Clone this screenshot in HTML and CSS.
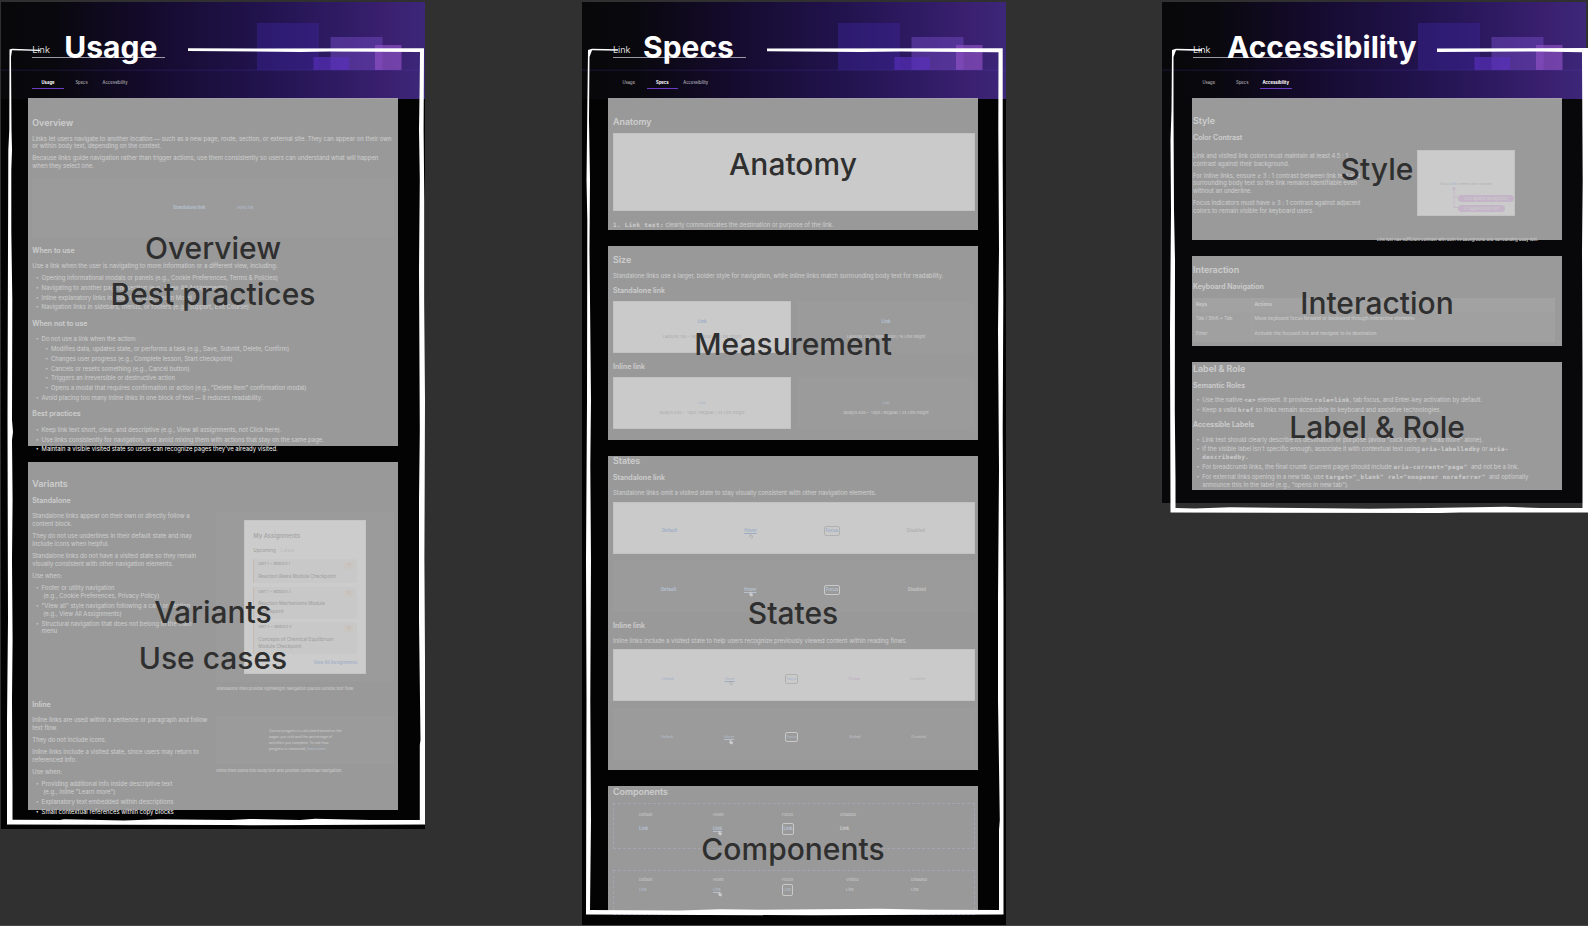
FILE: index.html
```html
<!DOCTYPE html>
<html lang="en">
<head>
  <meta charset="UTF-8" />
  <meta name="viewport" content="width=device-width, initial-scale=1.0"/>
  <title>Link documentation</title>
  <link rel="stylesheet" href="styles.css">
</head>
<body>
  <!-- Shared header artwork -->
  <svg class="defs" width="0" height="0">
    <symbol id="art" viewBox="0 0 424 97">
      <rect x="256" y="21" width="62" height="47" fill="#3f26a0" opacity=".42"/>
      <rect x="329.500" y="35" width="52" height="33" fill="#6b45b8" opacity=".55"/>
      <rect x="312.500" y="55" width="35.500" height="13" fill="#5930bd" opacity=".65"/>
      <rect x="374" y="43" width="26.500" height="25" fill="#8a50c0" opacity=".7"/>
      <rect x="0" y="67.500" width="424" height="1.500" fill="#5a3cc0" opacity=".16"/>
    </symbol>
    <symbol id="hand" viewBox="0 0 6 6">
      <path d="M2 3.500V1.300h.9v1.200l1.700.4-.3 2H2.600L1.300 3.500z" fill="none" stroke="currentColor" stroke-width=".6"/>
    </symbol>
    <symbol id="hand-solid" viewBox="0 0 6 6">
      <path d="M2 3V1.300h.9v1.200l1.700.4-.3 2H2.600L1.300 3.500z" fill="currentColor" stroke="currentColor" stroke-width=".6"/>
    </symbol>
  </svg>

  <main class="canvas">

    <!-- Usage -->
    <article class="board board-usage">
      <header class="hero">
        <svg class="hero-art"><use href="#art"/></svg>
        <div class="hero-title">Link</div>
        <nav class="tabs"><span class="active">Usage</span><span>Specs</span><span>Accessibility</span></nav>
      </header>
      <div class="content">
        <section class="overview">
          <h2>Overview</h2>
          <p>Links let users navigate to another location — such as a new page, route, section, or external site. They can appear on their own<br>or within body text, depending on the context.</p>
          <p>Because links guide navigation rather than trigger actions, use them consistently so users can understand what will happen<br>when they select one.</p>
          <div class="preview dark overview-preview"><b>Standalone link</b><span>Inline link</span></div>
          <h3>When to use</h3>
          <p>Use a link when the user is navigating to more information or a different view, including:</p>
          <ul>
            <li>Opening informational modals or panels (e.g., Cookie Preferences, Terms &amp; Policies)</li>
            <li>Navigating to another page or section (e.g., View All Assignments)</li>
            <li>Inline explanatory links in body text (e.g., Learn More)</li>
            <li>Navigation links in sidebars, menus, or footers (e.g., Support, Exit Course)</li>
          </ul>
          <h3>When not to use</h3>
          <ul>
            <li>Do not use a link when the action:</li>
            <li class="sub">Modifies data, updates state, or performs a task (e.g., Save, Submit, Delete, Confirm)</li>
            <li class="sub">Changes user progress (e.g., Complete lesson, Start checkpoint)</li>
            <li class="sub">Cancels or resets something (e.g., Cancel button)</li>
            <li class="sub">Triggers an irreversible or destructive action</li>
            <li class="sub">Opens a modal that requires confirmation or action (e.g., "Delete item" confirmation modal)</li>
            <li>Avoid placing too many inline links in one block of text — it reduces readability.</li>
          </ul>
          <h3>Best practices</h3>
          <ul>
            <li>Keep link text short, clear, and descriptive (e.g., View all assignments, not Click here).</li>
            <li>Use links consistently for navigation, and avoid mixing them with actions that stay on the same page.</li>
            <li>Maintain a visible visited state so users can recognize pages they've already visited.</li>
          </ul>
        </section>

        <section class="variants">
          <h2>Variants</h2>
          <h3>Standalone</h3>
          <div class="variant-row first">
            <div>
              <p>Standalone links appear on their own or directly follow a<br>content block.</p>
              <p>They do not use underlines in their default state and may<br>include icons when helpful.</p>
              <p>Standalone links do not have a visited state so they remain<br>visually consistent with other navigation elements.</p>
              <p>Use when:</p>
              <ul>
                <li>Footer or utility navigation<br>&nbsp;(e.g., Cookie Preferences, Privacy Policy)</li>
                <li>"View all" style navigation following a card or section<br>&nbsp;(e.g., View All Assignments)</li>
                <li>Structural navigation that does not belong to the main<br>menu</li>
              </ul>
            </div>
            <figure>
              <div class="preview dark tall">
                <div class="assignments">
                  <h4>My Assignments</h4>
                  <div class="filter"><b>Upcoming</b><span>Latest</span></div>
                  <div class="task"><small>UNIT 1 &nbsp;•&nbsp; MODULE 1</small><i>01</i><b>Reaction Rates Module Checkpoint</b></div>
                  <div class="task two"><small>UNIT 1 &nbsp;•&nbsp; MODULE 3</small><i>01</i><b>Reaction Mechanisms Module<br>Checkpoint</b></div>
                  <div class="task two"><small>UNIT 3 &nbsp;•&nbsp; MODULE 4</small><i>01</i><b>Concepts of Chemical Equilibrium<br>Module Checkpoint</b></div>
                  <a>View All Assignments</a>
                </div>
              </div>
              <figcaption>Standalone links provide lightweight navigation placed outside text flow.</figcaption>
            </figure>
          </div>
          <h3>Inline</h3>
          <div class="variant-row">
            <div>
              <p>Inline links are used within a sentence or paragraph and follow<br>text flow.</p>
              <p>They do not include icons.</p>
              <p>Inline links include a visited state, since users may return to<br>referenced info.</p>
              <p>Use when:</p>
              <ul>
                <li>Providing additional info inside descriptive text<br>&nbsp;(e.g., inline "Learn more")</li>
                <li>Explanatory text embedded within descriptions</li>
                <li>Small contextual references within copy blocks</li>
              </ul>
            </div>
            <figure>
              <div class="preview dark short">
                <p class="progress">Course progress is calculated based on the<br>pages you visit and the percentage of<br>activities you complete. To see how<br>progress is measured, <a>learn more</a>.</p>
              </div>
              <figcaption>Inline links blend into body text and provide contextual navigation.</figcaption>
            </figure>
          </div>
        </section>
      </div>
      <div class="cover usage-1"><span>Overview</span><span>Best practices</span></div>
      <div class="cover usage-2"><span>Variants</span><span>Use cases</span></div>
      <div class="board-name">Usage</div>
    </article>

    <!-- Specs -->
    <article class="board board-specs">
      <header class="hero">
        <svg class="hero-art"><use href="#art"/></svg>
        <div class="hero-title">Link</div>
        <nav class="tabs"><span>Usage</span><span class="active">Specs</span><span>Accessibility</span></nav>
      </header>
      <div class="content">
        <section class="anatomy">
          <h2>Anatomy</h2>
          <div class="preview light"><b>Link</b></div>
          <p><code>1. Link text:</code> clearly communicates the destination or purpose of the link.</p>
        </section>

        <section class="size">
          <h2>Size</h2>
          <p>Standalone links use a larger, bolder style for navigation, while Inline links match surrounding body text for readability.</p>
          <h3>Standalone link</h3>
          <div class="pair">
            <div class="preview light"><b>Link</b><small>Label/M.700 – 16px / Bold / 16 Line height</small></div>
            <div class="preview dark"><b>Link</b><small>Label/M.700 – 16px / Bold / 16 Line height</small></div>
          </div>
          <h3>Inline link</h3>
          <div class="pair inline-pair">
            <div class="preview light"><span>Link</span><small>Body/S.400 – &nbsp;14px / Regular / 24 Line height</small></div>
            <div class="preview dark"><span>Link</span><small>Body/S.400 – &nbsp;14px / Regular / 24 Line height</small></div>
          </div>
        </section>

        <section class="states">
          <h2>States</h2>
          <h3>Standalone link</h3>
          <p>Standalone links omit a visited state to stay visually consistent with other navigation elements.</p>
          <div class="preview light state-row">
            <b>Default</b><b class="hover">Hover<svg><use href="#hand"/></svg></b><b class="focus">Focus</b><b class="disabled">Disabled</b>
          </div>
          <div class="preview dark state-row">
            <b>Default</b><b class="hover">Hover<svg><use href="#hand-solid"/></svg></b><b class="focus">Focus</b><b class="disabled">Disabled</b>
          </div>
          <h3>Inline link</h3>
          <p>Inline links include a visited state to help users recognize previously viewed content within reading flows.</p>
          <div class="preview light state-row inline">
            <span>Default</span><span class="hover">Hover<svg><use href="#hand"/></svg></span><span class="focus">Focus</span><span class="visited">Visited</span><span class="disabled">Disabled</span>
          </div>
          <div class="preview dark state-row inline">
            <span>Default</span><span class="hover">Hover<svg><use href="#hand-solid"/></svg></span><span class="focus">Focus</span><span class="visited">Visited</span><span class="disabled">Disabled</span>
          </div>
        </section>

        <section class="components">
          <h2>Components</h2>
          <div class="component-set">
            <span>Default</span><span>Hover</span><span>Focus</span><span>Disabled</span>
            <b class="blue">Link</b><b class="hover blue">Link<svg><use href="#hand-solid"/></svg></b><b class="focus blue">Link</b><b>Link</b>
          </div>
          <div class="component-set five">
            <span>Default</span><span>Hover</span><span>Focus</span><span>Visited</span><span>Disabled</span>
            <em class="blue">Link</em><em class="hover blue">Link<svg><use href="#hand-solid"/></svg></em><em class="focus blue">Link</em><em>Link</em><em>Link</em>
          </div>
        </section>
      </div>
      <div class="cover specs-1"><span>Anatomy</span></div>
      <div class="cover specs-2"><span>Measurement</span></div>
      <div class="cover specs-3"><span>States</span></div>
      <div class="cover specs-4"><span>Components</span></div>
      <div class="board-name">Specs</div>
    </article>

    <!-- Accessibility -->
    <article class="board board-access">
      <header class="hero">
        <svg class="hero-art"><use href="#art"/></svg>
        <div class="hero-title">Link</div>
        <nav class="tabs"><span>Usage</span><span>Specs</span><span class="active">Accessibility</span></nav>
      </header>
      <div class="content">
        <section class="style">
          <h2>Style</h2>
          <h3>Color Contrast</h3>
          <div class="style-row">
            <div>
              <p>Link and visited link colors must maintain at least 4.5 : 1<br>contrast against their background.</p>
              <p>For inline links, ensure ≥ 3 : 1 contrast between link text and<br>surrounding body text so the link remains identifiable even<br>without an underline.</p>
              <p>Focus indicators must have ≥ 3 : 1 contrast against adjacent<br>colors to remain visible for keyboard users.</p>
            </div>
            <figure>
              <div class="contrast">
                <p>Focus <a>links</a> meet color contrast</p>
                <svg class="connector" viewBox="0 0 8 22"><circle cx="2" cy="1.500" r="1.500" fill="#c98fe0"/><path d="M2 2V20.500H7M2 10H7" fill="none" stroke="#c98fe0" stroke-width=".8"/></svg>
                <span class="pill">4.5:1 against background</span>
                <span class="pill small">3:1 against body text</span>
              </div>
              <figcaption>Link text has sufficient contrast with both its background and surrounding body text.</figcaption>
            </figure>
          </div>
        </section>

        <section class="interaction">
          <h2>Interaction</h2>
          <h3>Keyboard Navigation</h3>
          <table>
            <tr><th>Keys</th><th>Actions</th></tr>
            <tr><td>Tab / Shift + Tab</td><td>Move keyboard focus forward or backward through interactive elements</td></tr>
            <tr><td>Enter</td><td>Activate the focused link and navigate to its destination</td></tr>
          </table>
        </section>

        <section class="roles">
          <h2>Label &amp; Role</h2>
          <h3>Semantic Roles</h3>
          <ul>
            <li>Use the native <code>&lt;a&gt;</code> element. It provides <code>role=link</code>, tab focus, and Enter-key activation by default.</li>
            <li>Keep a valid <code>href</code> so links remain accessible to keyboard and assistive technologies.</li>
          </ul>
          <h3>Accessible Labels</h3>
          <ul>
            <li>Link text should clearly describe its destination or purpose (avoid "click here" or "read more" alone).</li>
            <li>If the visible label isn't specific enough, associate it with contextual text using <code>aria-labelledby</code> or <code>aria-<br>describedby.</code></li>
            <li>For breadcrumb links, the final crumb (current page) should include <code>aria-current="page"</code> &nbsp;and not be a link.</li>
            <li>For external links opening in a new tab, use <code>target="_blank" rel="noopener noreferrer"</code> &nbsp;and optionally<br>announce this in the label (e.g., "opens in new tab").</li>
          </ul>
        </section>
      </div>
      <div class="cover access-1"><span>Style</span></div>
      <div class="cover access-2"><span>Interaction</span></div>
      <div class="cover access-3"><span>Label &amp; Role</span></div>
      <div class="board-name">Accessibility</div>
    </article>

    <!-- Hand drawn frames around the boards -->
    <svg class="frames" viewBox="0 0 1588 926" fill="#fff">
      <path d="M9.500 49.500L12 48.800L40 49.800V51L12 50.300L11 57L11.500 130L12 150L11.300 170V230L12.300 300L12 420L13 432L12 440L12.600 500L12 560L12.600 640L12 700L12.500 790V819.700L60 820L64 819.300L100 820L124 820.400L160 819.300L230 820L250 819L300 820L315 818.800L370 820H419.800V745L420.500 740L419 620V500L419.800 430L419 270L419.800 180L419 130L419.600 90L420 52L330 51.500L300 52L188 51V48.200L260 48.600L424 48.200L423.600 130L424.300 200V300L425 400L424.500 560L425 660V824.500L250 825.200L230 825L7 824.500V720L8 620L7.500 420L8 250L8.300 150L9.300 130Z"/>
      <path d="M588 50L592 48.800L618 49.300V50.700L592 50.200L589.500 57L589 120L590 180L589.500 250L591 400L590.300 465L591 560L590.300 700L591 820L590 910L680 910.500L720 909.200L760 909.800L880 908.800L930 909.800L999 910V830L999.800 820L998 700V600L999 470L998 330L999 250L998.300 130L998.500 52.300L900 51.500L860 52L767 51.300V48.500L1002.700 48.300V160L1003.300 300L1002.700 430L1003.500 600V914.500L813 915.300L586 914.500L586.500 700L586 560L587 400L587.300 220L586.500 180L587.300 110Z"/>
      <path d="M1172 50L1176 48.800L1202 49.300V51L1176 50.200L1173.500 57V110L1174 210L1175 260L1174.800 410L1175.500 480V508L1195 508.600L1230 507.200L1300 508L1370 508.700L1430 508L1505 506.800L1540 508H1582.500V375L1582 250L1582.700 180L1582 60V52.300L1540 51.500L1437 52V48.500L1588 48V512.500H1460L1440 513L1170.500 512.500L1170 330L1171 210L1170.500 140L1171.500 110Z"/>
    </svg>
  </main>
</body>
</html>
```

FILE: styles.css
```css
* {
  margin: 0;
  padding: 0;
  box-sizing: border-box;
}

body {
  font-family: Inter, "Liberation Sans", sans-serif;
  background-color: #303030;
  overflow: hidden;
}

.defs {
  position: absolute;
}

.canvas {
  position: relative;
  width: 1588px;
  height: 926px;
  overflow: hidden;
  border-bottom: 1px solid #4a4648;
}

/* Boards placed on the canvas */
.board {
  position: absolute;
  top: 2px;
  width: 424px;
  height: 924px;
  background: #030303;
  color: #fff;
  font-size: 5.95px;
  line-height: 7.9px;
  white-space: nowrap;
}

.board-usage {
  left: 1.3px;
  height: 827px;
}

.board-specs {
  left: 582px;
}

.board-access {
  left: 1162px;
  height: 501px;
  background: #08080a;
}

.hero {
  position: relative;
  height: 97px;
  padding: 42px 31px 0;
  background: linear-gradient(90deg, #08080a 0%, #09080d 12%, #150b2e 36%, #22134e 62%, #2f1b64 80%, #3b2070 91%, #3c2779 100%);
}

.hero-art {
  position: absolute;
  top: 0;
  left: 0;
  width: 424px;
  height: 97px;
}

.hero-title {
  width: 133px;
  height: 14px;
  font-size: 9px;
  line-height: 12px;
  color: #ddd;
  border-bottom: 1.500px solid #9c98a6;
}

.tabs {
  display: flex;
  gap: 2px;
  margin-top: 16px;
  font-size: 4.2px;
  color: #c4c2c9;
  text-align: center;
}

.tabs span {
  width: 31.5px;
  height: 15px;
  line-height: 18.5px;
}

.tabs .active {
  color: #fff;
  font-weight: 700;
  border-bottom: 1px solid #6a3cc4;
}

.content {
  padding: 0 31px;
}

h2 {
  font-size: 8.9px;
  line-height: 10px;
  font-weight: 600;
  margin-bottom: 7px;
}

h3 {
  font-size: 7px;
  line-height: 8px;
  font-weight: 600;
  margin-bottom: 7.2px;
}

h2 + h3 {
  margin-top: 8px;
}

p {
  margin-bottom: 4.1px;
}

ul {
  list-style: none;
}

li {
  position: relative;
  margin-bottom: 2px;
  padding-left: 9.3px;
}

li::before {
  content: "•";
  position: absolute;
  left: 3.8px;
  font-size: 4.5px;
}

li.sub {
  margin-left: 9.3px;
}

code {
  font-family: "DejaVu Sans Mono", "Liberation Mono", monospace;
  font-weight: 700;
  font-size: 5.8px;
  line-height: 0;
  letter-spacing: 0.42px;
}

.preview {
  display: flex;
  align-items: center;
  justify-content: center;
  color: #0f66dc;
  font-size: 4px;
}

.preview.light {
  background: #f6f6f6;
  border: 1px solid #ccc;
}

.preview.dark {
  background: #0a0a0b;
  color: #8cc0ff;
}

figcaption {
  font-size: 4.05px;
  line-height: 6px;
}

/* Usage */
.overview {
  padding-top: 18.5px;
}

.overview-preview {
  height: 58.5px;
  gap: 32px;
  margin: 8px 0 9.8px;
}

.overview-preview b {
  font-size: 4.3px;
}

.overview-preview span {
  font-size: 3.7px;
}

.overview ul + h3 {
  margin-top: 8.3px;
}

.variants {
  margin-top: 25.7px;
}

.variant-row {
  display: grid;
  grid-template-columns: 184px 178px;
}

.variant-row.first {
  height: 189px;
}

.preview.tall {
  height: 170px;
  align-items: flex-start;
  padding-top: 7.5px;
}

.preview.short {
  height: 47.500px;
}

.tall + figcaption {
  margin-top: 4px;
}

.short + figcaption {
  margin-top: 4px;
}

.assignments {
  width: 122px;
  height: 154.5px;
  padding: 11px 8px;
  background: #fff;
  border: 1px solid #ddd;
  color: #222;
  line-height: 7.3px;
}

.assignments h4 {
  font-size: 5.9px;
  font-weight: 500;
  margin-bottom: 7.5px;
}

.filter {
  display: flex;
  gap: 5px;
  font-size: 4.6px;
}

.filter b {
  font-weight: 500;
}

.filter span {
  color: #999;
}

.task {
  display: grid;
  grid-template-columns: 1fr 11px;
  height: 24px;
  margin-top: 5.500px;
  padding: 2px 3px 0 4px;
  border-left: 1px solid #dc9b60;
  border-radius: 2px;
  background: #ececec;
}

.task + .task {
  margin-top: 3.5px;
}

.task.two {
  height: 31.800px;
}

.task small {
  font-size: 3.3px;
  font-weight: 600;
}

.task i {
  height: 7px;
  margin-top: 1px;
  border-radius: 4px;
  background: #f1d9c5;
  color: #b86a2a;
  font-size: 3px;
  font-style: normal;
  text-align: center;
}

.task b {
  font-size: 4.65px;
  font-weight: 500;
}

.assignments a {
  display: block;
  margin-top: 5px;
  font-size: 4.2px;
  font-weight: 600;
  text-align: right;
  color: #2a6ae0;
}

.progress {
  font-size: 3.55px;
  line-height: 6.2px;
  color: #eee;
  margin: 0;
}

.progress a {
  color: #8cc0ff;
}

/* Specs */
.anatomy {
  padding-top: 17.7px;
}

.anatomy h2 {
  margin-bottom: 6.3px;
}

.anatomy .preview {
  width: 362px;
  height: 78.5px;
  margin-bottom: 9.3px;
  font-size: 3.5px;
}

.size {
  padding-top: 22.6px;
}

.size p {
  margin-bottom: 6.4px;
}

.size h3 {
  margin-bottom: 6.3px;
}

.pair {
  display: grid;
  grid-template-columns: 178px 178px;
  gap: 6px;
  margin-bottom: 9.5px;
}

.pair .preview {
  height: 52.3px;
  flex-direction: column;
  line-height: 5px;
  gap: 9.5px;
  padding-top: 4px;
}

.pair b {
  font-size: 4.5px;
}

.pair span {
  font-size: 3.6px;
}

.inline-pair .preview {
  padding-top: 9.500px;
  gap: 4px;
}

.pair small {
  font-size: 4px;
  color: #444;
}

.pair .dark small {
  color: #fff;
}

.states {
  padding-top: 17.5px;
}

.states h3 {
  margin-bottom: 6.6px;
}

.states p {
  margin-bottom: 4.8px;
}

.state-row {
  height: 52px;
  width: 362px;
  padding: 7px 49px 0 48px;
  justify-content: space-between;
  line-height: 6px;
  font-size: 4.3px;
}

.state-row.dark {
  margin: 6.500px 0 9.800px;
}

.state-row.inline {
  font-size: 3.6px;
}

.hover {
  position: relative;
  text-decoration: underline;
}

.hover svg {
  position: absolute;
  left: 4px;
  top: 4.5px;
  width: 6px;
  height: 6px;
  color: #555;
}

.dark .hover svg,
.component-set .hover svg {
  color: #fff;
}

.focus {
  border: 1px solid #777;
  border-radius: 2px;
  padding: 1px 0.5px;
}

.dark .focus,
.component-set .focus {
  border-color: #eee;
}

.visited {
  color: #a040b8;
}

.disabled {
  color: #777;
}

.dark .visited {
  color: #e0c8f0;
}

.dark .disabled {
  color: #ccc;
}

.components {
  padding-top: 17.5px;
}

.component-set {
  display: grid;
  grid-template-columns: 74px 69px 58px 1fr;
  grid-template-rows: 8px 9px;
  row-gap: 5.500px;
  align-items: center;
  justify-items: start;
  width: 362px;
  height: 45.500px;
  padding: 7px 0 0 25px;
  margin-bottom: 21px;
  border: 1px dashed #3f3878;
  color: #eee;
  font-size: 3.9px;
}

.components h2 {
  margin-bottom: 6px;
}

.component-set.five {
  grid-template-columns: 74px 69px 64px 65px 1fr;
  row-gap: 2px;
  padding-top: 5.300px;
  margin: 0;
}

.component-set b {
  font-size: 4.5px;
}

.component-set em {
  font-style: normal;
}

.component-set .blue {
  color: #8cc0ff;
}

/* Accessibility */
.style {
  padding-top: 17.2px;
}

.style-row {
  display: grid;
  grid-template-columns: 184px 178px;
  height: 89px;
}

.style-row > div {
  padding-top: 2.3px;
}

.contrast {
  position: relative;
  width: 98px;
  height: 65.5px;
  margin: 1px 0 0 40px;
  padding-top: 29.5px;
  background: #fafafa;
  border: 1px solid #ccc;
  font-size: 3.5px;
  color: #555;
  text-align: center;
}

.contrast p {
  margin-bottom: 6px;
}

.contrast a {
  color: #0f66dc;
}

.connector {
  position: absolute;
  left: 34px;
  top: 36px;
  width: 8px;
  height: 22px;
}

.pill {
  display: block;
  width: 55.500px;
  height: 7px;
  margin: 0 0 3.5px 40px;
  border-radius: 4px;
  background: #d08ae6;
  color: #fff;
  line-height: 7px;
  font-size: 3.7px;
}

.pill.small {
  width: 47px;
}

.style figcaption {
  margin-top: 21.5px;
}

.interaction {
  padding-top: 26.8px;
}

.interaction h3 {
  margin-bottom: 6.5px;
}

table {
  width: 362px;
  table-layout: fixed;
  border-collapse: collapse;
  font-size: 4.7px;
  background: #242424;
}

tr {
  height: 14.5px;
}

th,
td {
  text-align: left;
  padding-left: 3px;
  border-bottom: 1px solid #2c2c2c;
}

th {
  background: #2f2f2f;
  font-weight: 600;
}

th:first-child,
td:first-child {
  width: 58px;
  border-right: 1px solid #333;
}

.roles {
  padding-top: 22px;
}

.roles h3 {
  margin-bottom: 6.8px;
}

.roles ul + h3 {
  margin-top: 6.5px;
}

/* Translucent labels over each part of a board */
.cover {
  position: absolute;
  left: 26.7px;
  width: 370px;
  display: flex;
  flex-direction: column;
  align-items: center;
  justify-content: center;
  background: rgba(191, 191, 191, 0.8);
  color: #2f2f2f;
  font-size: 30px;
  font-weight: 500;
  line-height: 46px;
}

.board-specs .cover {
  left: 26px;
}

.board-access .cover {
  left: 30px;
}

.usage-1 {
  top: 96px;
  height: 348px;
  padding-bottom: 2.5px;
}

.usage-2 {
  top: 460px;
  height: 348px;
  padding-bottom: 2px;
}

.specs-1 {
  top: 96px;
  height: 132px;
}

.specs-2 {
  top: 244px;
  height: 194px;
  padding-top: 1px;
}

.specs-3 {
  top: 454px;
  height: 313.5px;
  padding-top: 1px;
}

.specs-4 {
  top: 784px;
  height: 125px;
}

.access-1 {
  top: 96px;
  height: 142px;
  padding-bottom: 1px;
}

.access-2 {
  top: 254px;
  height: 90px;
  padding-top: 4px;
}

.access-3 {
  top: 360px;
  height: 127.500px;
  padding-top: 2px;
}

.board-name {
  position: absolute;
  left: 63px;
  top: 27px;
  font-size: 30px;
  line-height: 36px;
  font-weight: 700;
}

.board-specs .board-name {
  left: 61px;
}

.board-access .board-name {
  left: 65px;
}

.frames {
  position: absolute;
  top: 0;
  left: 0;
  width: 1588px;
  height: 926px;
}
```
